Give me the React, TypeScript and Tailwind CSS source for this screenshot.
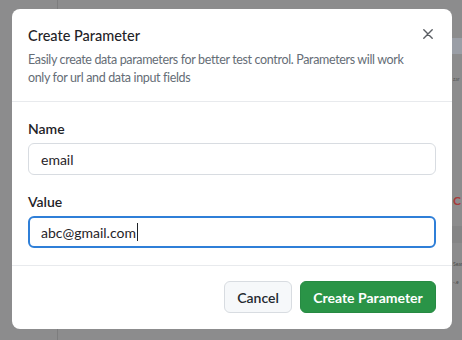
import React from "react";

function Strip({ h }: { h: string }) {
  return (
    <div className={`flex ${h}`}>
      <div className="w-[57px]" />
      <div className="w-px bg-[#7d7d7e]" />
    </div>
  );
}

export default function App() {
  const font = { fontFamily: '"Lato", "Noto Sans", sans-serif' };
  return (
    <div className="flex h-[340px] w-[462px] flex-col overflow-hidden bg-[#8c8c8d]" style={font}>
      <Strip h="h-[9px]" />
      <div className="flex">
        <div className="w-[12px]" />
        <div className="w-[440px] rounded-lg bg-white">
          {/* header */}
          <div className="flex flex-col px-4 pt-[17px] pb-[14px]">
            <div className="flex items-start justify-between">
              <div className="text-[14.5px] font-medium leading-[20px] text-[#1f2328]">
                Create Parameter
              </div>
              <button className="mr-[3px] mt-[3px] flex h-[10px] w-[10px] items-center justify-center">
                <svg width="10" height="10" viewBox="0 0 10 10">
                  <path
                    d="M0.8 0.8 L9.2 9.2 M9.2 0.8 L0.8 9.2"
                    stroke="#5b5f64"
                    strokeWidth="1.4"
                    strokeLinecap="round"
                  />
                </svg>
              </button>
            </div>
            <div className="mt-[5px] text-[12.5px] leading-[18px] tracking-[-0.35px] text-[#656d76]">
              Easily create data parameters for better test control. Parameters will work
              <br />
              only for url and data input fields
            </div>
          </div>
          <div className="h-px bg-[#e8eaed]" />
          {/* body */}
          <div className="flex flex-col px-4 pt-[17px] pb-[17px]">
            <label className="text-[14px] font-semibold leading-[20px] text-[#1f2328]">Name</label>
            <div className="mt-[4px] flex h-[32px] items-center rounded-md border border-[#d8dce1] px-[12px] text-[14px] text-[#1f2328]">
              email
            </div>
            <label className="mt-[17px] text-[14px] font-semibold leading-[20px] text-[#1f2328]">
              Value
            </label>
            <div className="mt-[4px] flex h-[32px] items-center rounded-md border-2 border-[#2f7fd8] px-[11px] text-[14px] text-[#1f2328]">
              abc@gmail.com
              <span className="ml-px inline-block h-[18px] w-px bg-[#1f2328]" />
            </div>
          </div>
          <div className="h-px bg-[#e8eaed]" />
          {/* footer */}
          <div className="flex justify-end gap-2 px-4 pt-[15px] pb-[16px]">
            <button className="flex h-[32px] w-[68px] items-center justify-center rounded-md border border-[#d8dce1] bg-[#f6f8fa] text-[14px] font-semibold text-[#24292f]">
              Cancel
            </button>
            <button className="flex h-[32px] w-[136px] items-center justify-center rounded-md border border-[#278a43] bg-[#2a9447] text-[14px] font-bold text-white">
              Create Parameter
            </button>
          </div>
        </div>
        {/* right strip: dimmed app content */}
        <div className="flex w-[10px] flex-col overflow-hidden">
          <div className="h-[29px]" />
          <div className="h-[16px] bg-[#9a9ea6]" />
          <div className="mt-[22px] pl-px text-[5px] leading-[6px] text-[#555]">zar</div>
          <div className="mt-[112px] pl-px text-[12px] font-bold leading-[14px] text-[#a83a3a]">
            C
          </div>
          <div className="mt-[18px] h-[17px] bg-[#858586]" />
          <div className="mt-[18px] pl-px text-[5px] leading-[6px] text-[#4a4a4a]">Sear</div>
          <div className="mt-[12px] pl-px text-[5px] leading-[6px] text-[#4a4a4a]">-.e</div>
        </div>
      </div>
      <Strip h="flex-1" />
    </div>
  );
}
